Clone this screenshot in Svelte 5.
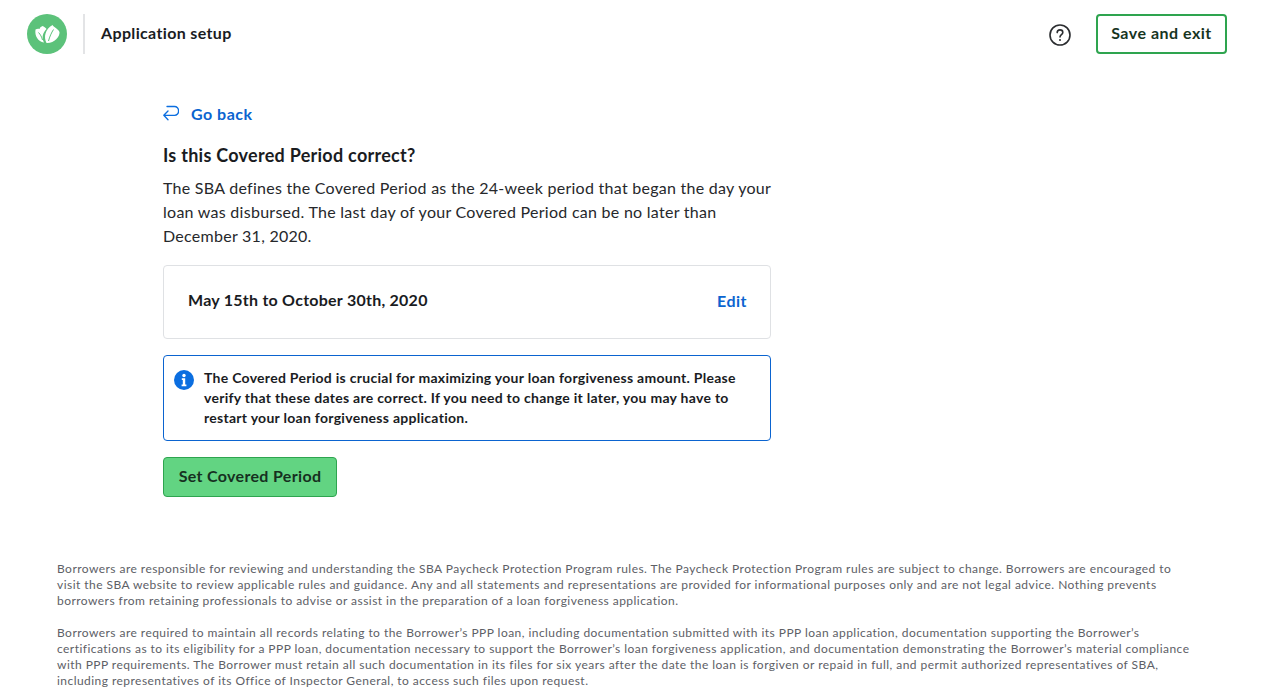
<script>
    const footer = [
        "Borrowers are responsible for reviewing and understanding the SBA Paycheck Protection Program rules. The Paycheck Protection Program rules are subject to change. Borrowers are encouraged to visit the SBA website to review applicable rules and guidance. Any and all statements and representations are provided for informational purposes only and are not legal advice. Nothing prevents borrowers from retaining professionals to advise or assist in the preparation of a loan forgiveness application.",
        "Borrowers are required to maintain all records relating to the Borrower’s PPP loan, including documentation submitted with its PPP loan application, documentation supporting the Borrower’s certifications as to its eligibility for a PPP loan, documentation necessary to support the Borrower’s loan forgiveness application, and documentation demonstrating the Borrower’s material compliance with PPP requirements. The Borrower must retain all such documentation in its files for six years after the date the loan is forgiven or repaid in full, and permit authorized representatives of SBA, including representatives of its Office of Inspector General, to access such files upon request."
    ]
</script>

<div class=page>
    <header>
        <div class=brand>
            <svg class=logo viewBox="0 0 40 40" width=40 height=40>
                <circle cx=20 cy=20 r=20 fill="#5cc27a"/>
                <path d="M19.500 29C16.500 23 18 15.500 25.500 11 27 13.500 31.500 15 32.500 18 33 23 27 29.500 19.500 29z" fill="#fff"/>
                <path d="M17 28.500C11 27.500 7.500 22 8.500 15.500 10 14.500 11.500 14.500 12.500 15 13 13 14.500 12.500 15.500 12 17 12.500 18.500 13.500 19.500 15 15.500 19 14.500 24 17 28.500z" fill="#fff"/>
                <path d="M21.500 27c1-4 3-8.500 5-11.500M15.500 26c-.8-3-2-5.500-4-7.500" stroke="#5cc27a" stroke-width="1" fill="none"/>
            </svg>
            <div class=divider></div>
            <div class=title>Application setup</div>
        </div>
        <div class=actions>
            <svg class=help viewBox="0 0 24 24" width=24 height=24 fill="none">
                <circle cx=12 cy=12 r=10 stroke="#2b2d30" stroke-width="1.600"/>
                <path d="M9.200 9.600c0-1.600 1.200-2.700 2.800-2.700s2.800 1 2.800 2.500c0 2.300-2.800 2.300-2.800 4.600" stroke="#2b2d30" stroke-width="1.600" stroke-linecap="round"/>
                <circle cx=12 cy=17 r=1 fill="#2b2d30"/>
            </svg>
            <button class=save>Save and exit</button>
        </div>
    </header>

    <main>
        <a class=back href="#back">
            <svg viewBox="0 0 16 16" width=16 height=16 fill="none">
                <path d="M4 1.500h7.500a4 4 0 0 1 4 4.300 4 4 0 0 1-4 4.500H1M5 6 .8 10.300 5 14.800" stroke="#0b6ee0" stroke-width="1.300" stroke-linecap="round" stroke-linejoin="round"/>
            </svg>
            Go back
        </a>
        <h1>Is this Covered Period correct?</h1>
        <p class=intro>The SBA defines the Covered Period as the 24-week period that began the day your loan was disbursed. The last day of your Covered Period can be no later than December 31, 2020.</p>
        <div class=card>
            <span class=dates>May 15th to October 30th, 2020</span>
            <a class=edit href="#edit">Edit</a>
        </div>
        <div class=notice>
            <svg viewBox="0 0 20 20" width=20 height=20>
                <circle cx=10 cy=10 r=10 fill="#0b6ee0"/>
                <circle cx=10 cy=5.500 r=1.700 fill="#fff"/>
                <path d="M7.800 8.300h3.400v6.200h1.200v1.700H7.600v-1.700h1.200V10h-1z" fill="#fff"/>
            </svg>
            <div class=notice-text>The Covered Period is crucial for maximizing your loan forgiveness amount. Please verify that these dates are correct. If you need to change it later, you may have to restart your loan forgiveness application.</div>
        </div>
        <button class=primary>Set Covered Period</button>
    </main>

    <footer>
        {#each footer as para}
            <p>{para}</p>
        {/each}
    </footer>
</div>

<style>
    :global(body) {
        background: #fff;
    }
    .page {
        font-family: "Lato", "Open Sans", sans-serif;
        color: #1a1c1f;
        height: 696px;
        overflow: hidden;
    }
    header {
        display: flex;
        justify-content: space-between;
        align-items: center;
        padding: 14px 40px 0 27px;
    }
    .brand {
        display: flex;
        align-items: center;
    }
    .divider {
        width: 2px;
        height: 40px;
        background: #e3e4e6;
        margin: 0 16px;
    }
    .title {
        font-size: 16px;
        font-weight: 700;
        letter-spacing: .35px;
        margin-bottom: 4px;
    }
    .actions {
        display: flex;
        align-items: center;
        gap: 24px;
    }
    .help {
        margin-top: 2px;
    }
    .save {
        width: 131px;
        height: 40px;
        background: #fff;
        border: 2px solid #2ea44f;
        border-radius: 4px;
        font: 700 16px "Lato", sans-serif;
        letter-spacing: .5px;
        color: #17351f;
        padding: 0 0 3px;
    }
    main {
        width: 608px;
        margin: 47px 0 0 163px;
    }
    .back {
        display: flex;
        align-items: center;
        gap: 12px;
        color: #0b64d0;
        font-weight: 700;
        font-size: 16px;
        letter-spacing: .5px;
        text-decoration: none;
        height: 24px;
    }
    h1 {
        font-size: 18px;
        font-weight: 700;
        letter-spacing: .27px;
        margin: 18px 0 0;
        line-height: 24px;
    }
    .intro {
        font-size: 16px;
        letter-spacing: .27px;
        line-height: 24px;
        margin: 9px 0 17px;
        color: #26282b;
    }
    .card {
        display: flex;
        justify-content: space-between;
        align-items: center;
        height: 72px;
        border: 1px solid #dfe1e4;
        border-radius: 4px;
        padding: 0 23px 0 24px;
    }
    .dates {
        font-weight: 700;
        font-size: 16px;
        letter-spacing: .25px;
        margin-bottom: 5px;
    }
    .edit {
        color: #0b64d0;
        font-weight: 700;
        font-size: 16px;
        letter-spacing: .5px;
        text-decoration: none;
        margin-bottom: 4px;
    }
    .notice {
        display: flex;
        gap: 10px;
        margin-top: 16px;
        border: 1px solid #0b64d0;
        border-radius: 4px;
        padding: 12px 10px 12px;
        font-size: 14px;
        font-weight: 700;
        letter-spacing: .28px;
        line-height: 20px;
        height: 60px;
    }
    .notice svg {
        flex: none;
        margin-top: 2px;
    }
    .notice-text {
        width: 540px;
    }
    .primary {
        margin-top: 16px;
        width: 174px;
        height: 40px;
        background: #62d482;
        border: 1px solid #2ea44f;
        border-radius: 4px;
        font: 700 16px "Lato", sans-serif;
        letter-spacing: .33px;
        color: #16301f;
        padding: 0 0 4px;
    }
    footer {
        margin: 64px 0 0 57px;
        width: 1136px;
        font-size: 12px;
        letter-spacing: .455px;
        line-height: 16px;
        color: #5d6066;
    }
    footer p {
        margin: 0 0 16px;
    }
</style>
